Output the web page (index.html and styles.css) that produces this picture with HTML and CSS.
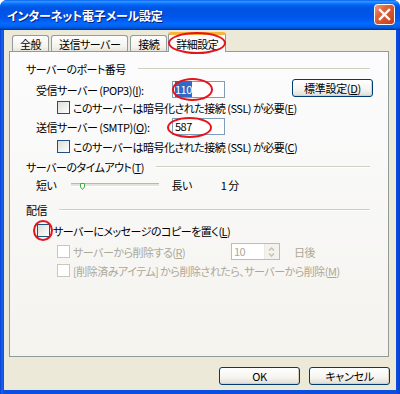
FILE: index.html
```html
<!DOCTYPE html>
<html lang="ja">

<head>
    <meta charset="UTF-8">
    <title>インターネット電子メール設定</title>
    <link rel="stylesheet" href="styles.css">
</head>

<body>
    <div class="window">
        <!-- Title bar -->
        <div class="titlebar">
            <span class="title">インターネット電子メール設定</span>
            <span class="close">
                <svg width="21" height="21" viewBox="0 0 21 21">
                    <defs>
                        <linearGradient id="cg" x1="0" y1="0" x2="1" y2="1">
                            <stop offset="0" stop-color="#f0a38a"/>
                            <stop offset="0.35" stop-color="#e0633c"/>
                            <stop offset="1" stop-color="#c33a12"/>
                        </linearGradient>
                    </defs>
                    <rect x="0.5" y="0.5" width="20" height="20" rx="3" fill="url(#cg)" stroke="#fff"/>
                    <path d="M6 6 L15 15 M15 6 L6 15" stroke="#fff" stroke-width="2.4" stroke-linecap="square"/>
                </svg>
            </span>
        </div>

        <div class="client">
            <!-- Tabs -->
            <div class="tabs">
                <span class="tab">全般</span>
                <span class="tab">送信サーバー</span>
                <span class="tab">接続</span>
                <span class="tab active">詳細設定<span class="mark mark-tab"></span></span>
            </div>

            <div class="panel">
                <!-- Server ports -->
                <div class="head"><span>サーバーのポート番号</span><span class="rule"></span></div>
                <div class="field-row">
                    <span class="field-label">受信サーバー (POP3)(<u>I</u>):</span>
                    <span class="port"><span class="sel">110</span><span class="mark mark-pop"></span></span>
                    <button class="btn btn-default">標準設定(<u>D</u>)</button>
                </div>
                <div class="check-row indent">
                    <span class="check"></span>
                    <span>このサーバーは暗号化された接続 (SSL) が必要(<u>E</u>)</span>
                </div>
                <div class="field-row smtp">
                    <span class="field-label">送信サーバー (SMTP)(<u>O</u>):</span>
                    <span class="port">587<span class="mark mark-smtp"></span></span>
                </div>
                <div class="check-row indent ssl2">
                    <span class="check"></span>
                    <span>このサーバーは暗号化された接続 (SSL) が必要(<u>C</u>)</span>
                </div>

                <!-- Timeout -->
                <div class="head head-timeout"><span>サーバーのタイムアウト(<u>T</u>)</span><span class="rule"></span></div>
                <div class="slider-row">
                    <span>短い</span>
                    <span class="track">
                        <svg class="thumb" width="5" height="7" viewBox="0 0 5 7">
                            <path d="M0.5 0.5 H4.5 V4 L2.5 6.5 L0.5 4 Z" fill="#fff" stroke="#3cb043"/>
                        </svg>
                    </span>
                    <span>長い</span>
                    <span class="value">1 分</span>
                </div>

                <!-- Delivery -->
                <div class="head head-delivery"><span>配信</span><span class="rule"></span></div>
                <div class="check-row keep">
                    <span class="check">
                        <span class="mark mark-check"></span>
                    </span>
                    <span>サーバーにメッセージのコピーを置く(<u>L</u>)</span>
                </div>
                <div class="check-row indent disabled remove-row">
                    <span class="check"></span>
                    <span class="remove-label">サーバーから削除する(<u>R</u>)</span>
                    <span class="spin">
                        <span class="spin-value">10</span>
                        <span class="spin-btn">
                            <svg width="13" height="14" viewBox="0 0 13 14">
                                <path d="M4 5.5 L6.5 3 L9 5.5 M4 8.5 L6.5 11 L9 8.5" fill="none" stroke="#c5c2b2" stroke-width="1.5"/>
                            </svg>
                        </span>
                    </span>
                    <span class="days">日後</span>
                </div>
                <div class="check-row indent disabled deleted-row">
                    <span class="check"></span>
                    <span>[削除済みアイテム] から削除されたら、サーバーから削除(<u>M</u>)</span>
                </div>
            </div>

            <!-- Dialog buttons -->
            <div class="footer">
                <button class="btn btn-main">OK</button>
                <button class="btn btn-main">キャンセル</button>
            </div>
        </div>
    </div>
</body>

</html>
```

FILE: styles.css
```css
body {
    margin: 0;
    background: #fff;
    font-family: "Noto Sans CJK JP", "Noto Sans", sans-serif;
    font-size: 11px;
    letter-spacing: -0.5px;
    font-feature-settings: "palt";
    color: #000;
}

u {
    text-decoration: underline;
    text-decoration-thickness: 1px;
    text-underline-offset: 1px;
}

/* Window frame */
.window {
    width: 400px;
    height: 394px;
    box-sizing: border-box;
    padding: 0 4px 4px 4px;
    background: linear-gradient(to right, #0a3fd4, #1963ec 2px, #0a4fe0 4px, #0a4fe0 396px, #0a3fd4);
    border-radius: 7px 7px 0 0;
    display: flex;
    flex-direction: column;
}

.titlebar {
    height: 30px;
    margin: 0 -4px;
    padding: 0 5px 0 7px;
    border-radius: 7px 7px 0 0;
    background: linear-gradient(to bottom, #0058ee 0%, #3593ff 4%, #288eff 7%, #127dff 10%, #036ffc 14%, #0262ee 18%, #0057e5 24%, #0054e3 30%, #0055eb 56%, #005bf5 66%, #026afe 78%, #0062ef 88%, #0052d6 94%, #0040ab 97%, #003092 100%);
    display: flex;
    align-items: center;
    justify-content: space-between;
}

.title {
    color: #fff;
    font-weight: bold;
    font-size: 12px;
    letter-spacing: -0.2px;
    text-shadow: 1px 1px 0 #0a1e7a;
}

.close {
    display: flex;
    margin-top: -1px;
}

.client {
    flex: 1;
    background: #ece9d8;
    display: flex;
    flex-direction: column;
}

/* Tabs */
.tabs {
    display: flex;
    align-items: flex-end;
    height: 21px;
    padding-left: 8px;
    gap: 2px;
}

.tab {
    height: 15px;
    line-height: 16px;
    padding: 0 7px;
    border: 1px solid #919b9c;
    border-bottom: none;
    border-radius: 3px 3px 0 0;
    background: linear-gradient(#fefefe, #f4f3ee 70%, #e6e4da);
}

.tab.active {
    position: relative;
    z-index: 1;
    height: 17px;
    line-height: 19px;
    margin-left: -1px;
    margin-bottom: -1px;
    padding: 0 7px;
    background: #fcfcfe;
    border-top: 3px solid #f7b53c;
}

/* Red annotation marks */
.mark {
    position: absolute;
    border: 2px solid #e4141b;
    border-radius: 50%;
    box-sizing: border-box;
    pointer-events: none;
}

.mark-tab {
    left: -1px;
    top: -3px;
    width: calc(100% + 2px);
    height: 22px;
}

.mark-pop {
    left: -1px;
    top: -4px;
    width: 41px;
    height: 23px;
}

.mark-smtp {
    left: -6px;
    top: -2px;
    width: 45px;
    height: 21px;
}

.mark-check {
    left: -5px;
    top: -5px;
    width: 20px;
    height: 21px;
}

/* Main panel */
.panel {
    height: 306px;
    box-sizing: border-box;
    margin: 0 7px 0 5px;
    padding: 10px 18px 0 16px;
    border: 1px solid #919b9c;
    background: linear-gradient(#fcfcfe, #f4f3ee);
}

.head {
    display: flex;
    align-items: center;
    gap: 12px;
    height: 14px;
    line-height: 14px;
}

.rule {
    flex: 1;
    border-top: 1px solid #d0d0bf;
    border-bottom: 1px solid #fff;
}

.head-timeout {
    margin-top: 7px;
}

.head-delivery {
    margin-top: 11px;
}

.field-row {
    display: flex;
    align-items: center;
    height: 17px;
    margin-top: 5px;
    padding-left: 10px;
}

.field-row.smtp {
    margin-top: 4px;
}

.field-label {
    width: 136px;
    white-space: nowrap;
}

.port {
    position: relative;
    width: 53px;
    height: 17px;
    box-sizing: border-box;
    padding: 0 2px;
    border: 1px solid #7f9db9;
    background: #fff;
    line-height: 15px;
}

.sel {
    background: #316ac5;
    color: #fff;
}

.btn {
    font-family: inherit;
    font-size: 11px;
    letter-spacing: -0.3px;
    font-feature-settings: "palt";
    color: #000;
    padding: 0;
    border: 1px solid #003c74;
    border-radius: 3px;
    background: linear-gradient(#ffffff, #f5f4ef 60%, #e3e2da 92%, #d6d0c5);
    box-shadow: inset -1px -1px 0 #d8d2bd;
}

.btn-default {
    margin-left: auto;
    margin-right: -3px;
    width: 81px;
    height: 18px;
    margin-top: -3px;
}

.check-row {
    display: flex;
    align-items: center;
    gap: 3px;
    height: 13px;
    margin-top: 3px;
    white-space: nowrap;
}

.check-row.indent {
    padding-left: 31px;
}

.check-row.ssl2 {
    margin-top: 5px;
}

.check {
    position: relative;
    width: 13px;
    height: 13px;
    box-sizing: border-box;
    border: 1px solid #1c5180;
    background: linear-gradient(135deg, #dcdcd7, #fff);
    flex-shrink: 0;
}

.check-row.keep {
    margin-top: 7px;
    padding-left: 11px;
}

.check-row.disabled {
    color: #aca899;
}

.check-row.disabled .check {
    border-color: #cac8bb;
    background: #fff;
}

/* Timeout slider */
.slider-row {
    display: flex;
    align-items: center;
    height: 14px;
    margin-top: 4px;
    padding-left: 10px;
}

.track {
    position: relative;
    width: 88px;
    height: 2px;
    margin: 0 12px 0 15px;
    border-top: 1px solid #b9b8b0;
    border-bottom: 1px solid #fff;
    background: #e4e2d9;
}

.thumb {
    position: absolute;
    left: 9px;
    top: -1px;
}

.value {
    margin-left: 29px;
}

/* Delete after N days */
.remove-row {
    height: 17px;
    margin-top: 6px;
}

.remove-label {
    width: 155px;
}

.spin {
    display: flex;
    width: 49px;
    height: 17px;
    box-sizing: border-box;
    border: 1px solid #a9bfe0;
    background: #fff;
}

.spin-value {
    flex: 1;
    padding-left: 2px;
    line-height: 15px;
}

.spin-btn {
    display: flex;
    align-items: center;
    width: 14px;
    background: #f3f2ec;
    border-left: 1px solid #ebeae3;
}

.days {
    margin-left: 11px;
}

.deleted-row {
    margin-top: 4px;
}

/* Dialog buttons */
.footer {
    display: flex;
    justify-content: flex-end;
    gap: 9px;
    margin-top: 10px;
    padding-right: 6px;
}

.btn-main {
    width: 81px;
    height: 18px;
}
```
